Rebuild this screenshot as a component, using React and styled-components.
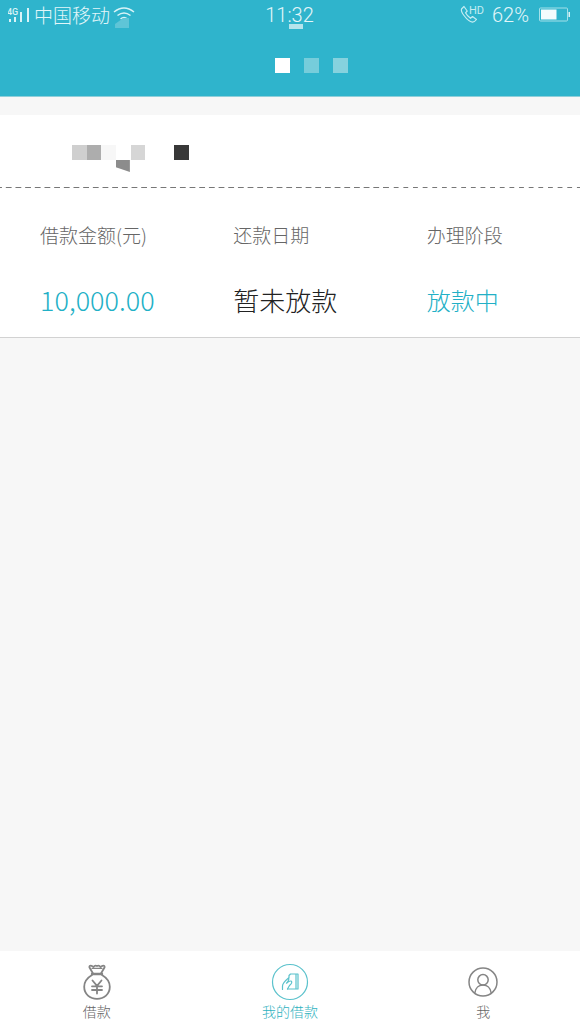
import React, { useState } from 'react';
import styled, { createGlobalStyle } from 'styled-components';

const loan = {
  amount: '10,000.00',
  dueDate: '暂未放款',
  stage: '放款中',
};

const BagIcon = () => (
  <svg width="28" height="36" viewBox="0 0 28 36" fill="none" stroke="#858585" strokeWidth="1.8" strokeLinejoin="round" strokeLinecap="round">
    <path d="M10 9.500 L6.500 3.500 Q6 1.200 8.500 1.800 L10.500 3 Q12 .8 14 2 Q16 .8 17.500 3 L19.500 1.800 Q22 1.200 21.500 3.500 L18 9.500" />
    <path d="M9 4.300 H19" strokeWidth="1.200" />
    <path d="M9 10 H19" strokeWidth="2.400" />
    <path d="M9 11 C4 14 1.200 18 1.200 22.800 C1.200 30.200 7 34.800 14 34.800 S26.800 30.200 26.800 22.800 C26.800 18 24 14 19 11" />
    <path d="M9.500 16.500 L14 21.800 L18.500 16.500 M14 21.800 V29.500 M9 22.300 H19 M9 26 H19" />
  </svg>
);

const CardIcon = () => (
  <svg width="38" height="38" viewBox="0 0 38 38" fill="none" stroke="#5bc2cc" strokeWidth="1.200" strokeLinejoin="round" strokeLinecap="round">
    <circle cx="19" cy="19" r="17.500" />
    <path d="M18 14.500 V12.500 L19.500 11 H27 V26 H16.500 M25 11.200 V25.800" />
    <path d="M11.500 26.500 V23 Q11.500 20 17.500 15 Q18.500 16.200 16.800 18.500 L15.500 20.200 Q19 17.200 20.500 18.300 Q21.500 19.800 18.500 22.500 L16.500 26" />
  </svg>
);

const UserIcon = () => (
  <svg width="30" height="30" viewBox="0 0 30 30" fill="none" stroke="#858585" strokeWidth="1.500">
    <circle cx="15" cy="15" r="14" />
    <circle cx="15" cy="12.800" r="5.200" />
    <path d="M6.800 26 C7.500 20.800 11 18 15 18 S22.500 20.800 23.200 26" />
  </svg>
);

const SignalIcon = () => (
  <svg width="24" height="18" viewBox="0 0 24 18" fill="#d9f3f7">
    <rect x="1" y="13" width="2" height="3" />
    <rect x="6" y="11" width="2" height="5" />
    <rect x="12" y="6" width="2" height="10" />
    <rect x="19" y="2" width="2" height="14" />
    <text x="-1" y="9" fontSize="9" fontWeight="500" fontFamily="Roboto, sans-serif">4G</text>
  </svg>
);

const WifiIcon = () => (
  <svg width="22" height="18" viewBox="0 0 22 18" fill="none" stroke="#d9f3f7" strokeWidth="1.500">
    <path d="M1 6 Q11 -2 21 6 M4.500 9.500 Q11 4.500 17.500 9.500 M7.500 13 Q11 10 14.500 13" />
    <circle cx="11" cy="15.200" r="1" fill="#d9f3f7" stroke="none" />
  </svg>
);

const CallIcon = () => (
  <svg width="25" height="20" viewBox="0 0 25 20" fill="none" stroke="#c5ecf2" strokeWidth="1.200" strokeLinejoin="round">
    <path d="M4 1.500 L1.500 4 Q.8 6.500 4 10.500 Q8.500 16.500 12.500 17.200 Q14.500 17 16.500 14.500 L12.500 11.500 L10.500 13.300 Q7 10.800 5.500 7.800 L7.200 6 Z" />
    <text x="9" y="9" fontSize="11" fontWeight="400" fill="#c5ecf2" stroke="none" fontFamily="Roboto, sans-serif">HD</text>
  </svg>
);

const BatteryIcon = () => (
  <svg width="32" height="16" viewBox="0 0 32 16">
    <rect x=".5" y="1" width="28" height="13" rx="1" fill="none" stroke="#a5e0e9" />
    <rect x="2" y="2.500" width="15.500" height="10" fill="#f4fcfd" />
    <rect x="29.500" y="5" width="1.500" height="5" fill="#d9f3f7" />
  </svg>
);

const tabs = [
  { id: 'borrow', label: '借款', icon: <BagIcon /> },
  { id: 'loans', label: '我的借款', icon: <CardIcon /> },
  { id: 'me', label: '我', icon: <UserIcon /> },
];

const App = () => {
  const [active, setActive] = useState('loans');

  return (
    <Page>
      <GlobalStyle />
      <Header>
        <StatusBar>
          <StatusGroup>
            <SignalIcon />
            <Carrier>中国移动</Carrier>
            <WifiWrap>
              <WifiSmudge />
              <WifiIcon />
            </WifiWrap>
          </StatusGroup>
          <Clock>
            11:32
            <ClockSmudge />
          </Clock>
          <StatusGroup $end>
            <CallIcon />
            <Percent>62%</Percent>
            <BatteryIcon />
          </StatusGroup>
        </StatusBar>
        <TitleBlocks>
          <Block $color="#ffffff" />
          <Block $color="#76cddb" />
          <Block $color="#86d2de" />
        </TitleBlocks>
      </Header>

      <Card>
        <CardTop>
          <NameBlocks>
            <Block $color="#cfcfcf" />
            <Block $color="#adadad" />
            <Block $color="#f7f7f7" />
            <Block>
              <Drip />
            </Block>
            <Block $color="#d6d6d6" />
            <Block />
            <Block />
            <Block $color="#383838" />
          </NameBlocks>
        </CardTop>
        <Divider>
          <Dashes $count={40} $gap="62%" />
          <Dashes $count={20} $gap="75%" />
        </Divider>
        <Details>
          <Detail>
            <Label>借款金额(元)</Label>
            <Value $color="#22b0c6" $size="27px">{loan.amount}</Value>
          </Detail>
          <Detail>
            <Label>还款日期</Label>
            <Value>{loan.dueDate}</Value>
          </Detail>
          <Detail>
            <Label>办理阶段</Label>
            <Value $color="#22b0c6" $size="24px">{loan.stage}</Value>
          </Detail>
        </Details>
      </Card>

      <TabBar>
        {tabs.map((tab) => (
          <Tab
            key={tab.id}
            type="button"
            $active={tab.id === active}
            onClick={() => setActive(tab.id)}
          >
            <IconBox>{tab.icon}</IconBox>
            {tab.label}
          </Tab>
        ))}
      </TabBar>
    </Page>
  );
};

export default App;

// Styled components
const GlobalStyle = createGlobalStyle`
  * {
    box-sizing: border-box;
  }

  body {
    margin: 0;
    background: #f7f7f7;
    font-family: "Noto Sans CJK SC", sans-serif;
    font-weight: 300;
  }

  svg {
    display: block;
    flex: none;
  }
`;

const Page = styled.div`
  display: flex;
  flex-direction: column;
  min-height: 100vh;
`;

const Header = styled.header`
  height: 97px;
  background: #2fb4cc;
  border-bottom: 1px solid #8fcfda;
`;

const StatusBar = styled.div`
  display: grid;
  grid-template-columns: 1fr auto 1fr;
  align-items: center;
  height: 28px;
  padding: 0 9px 0 8px;
  color: #e3f6f9;
`;

const StatusGroup = styled.div`
  display: flex;
  align-items: center;
  gap: 2px;
  height: 30px;
  justify-content: ${({ $end }) => ($end ? 'flex-end' : 'flex-start')};
`;

const Carrier = styled.span`
  font-size: 19px;
  line-height: 28px;
`;

const WifiWrap = styled.span`
  position: relative;
  margin-left: 1px;
`;

const WifiSmudge = styled.span`
  position: absolute;
  left: 2px;
  top: 12px;
  width: 14px;
  height: 10px;
  background: #5fc5d7;
  clip-path: polygon(0 60%, 60% 0, 100% 0, 100% 100%, 0 100%);
`;

const Clock = styled.time`
  position: relative;
  font-family: Roboto, sans-serif;
  font-size: 20px;
  font-weight: 300;
  line-height: 30px;
`;

const ClockSmudge = styled.span`
  position: absolute;
  left: 24px;
  top: 24px;
  width: 14px;
  height: 5px;
  background: #b5e4ec;
`;

const Percent = styled.span`
  padding: 0 8px 0 5px;
  font-family: Roboto, sans-serif;
  font-size: 20px;
  font-weight: 300;
  line-height: 30px;
`;

const TitleBlocks = styled.div`
  display: flex;
  justify-content: center;
  gap: 14px;
  padding: 30px 0 0 42px;
`;

const Block = styled.span`
  position: relative;
  min-width: 14px;
  width: 15px;
  height: 15px;
  background: ${({ $color }) => $color || 'transparent'};
`;

const Drip = styled.span`
  position: absolute;
  left: 0;
  top: 15px;
  width: 14px;
  height: 12px;
  background: #8c8c8c;
  clip-path: polygon(0 0, 100% 0, 100% 100%, 0 60%);
`;

const Card = styled.section`
  margin-top: 18px;
  background: #fff;
  border-bottom: 1px solid #d2d2d2;
`;

const CardTop = styled.div`
  height: 72px;
  padding: 30px 72px 0;
`;

const NameBlocks = styled.div`
  display: flex;
  width: 117px;
`;

const Divider = styled.div`
  display: flex;
`;

const Dashes = styled.span`
  flex: ${({ $count }) => $count};
  height: 1px;
  background: linear-gradient(90deg, #777 24%, transparent 24% ${({ $gap }) => $gap}, #777 ${({ $gap }) => $gap});
  background-size: calc(100% / ${({ $count }) => $count}) 1px;
`;

const Details = styled.dl`
  display: grid;
  grid-template-columns: repeat(3, 1fr);
  margin: 0;
  padding: 32px 0 17px;
`;

const Detail = styled.div`
  padding-left: 40px;
  white-space: nowrap;
`;

const Label = styled.dt`
  color: #666;
  font-size: 19px;
  line-height: 30px;
`;

const Value = styled.dd`
  margin: 30px 0 0;
  color: ${({ $color }) => $color || '#222'};
  font-size: ${({ $size }) => $size || '26px'};
  line-height: 40px;
`;

const TabBar = styled.nav`
  display: grid;
  grid-template-columns: repeat(3, 1fr);
  height: 80px;
  margin-top: auto;
  background: #fff;
`;

const Tab = styled.button`
  display: flex;
  flex-direction: column;
  align-items: center;
  padding: 12px 0 0;
  border: 0;
  background: none;
  color: ${({ $active }) => ($active ? '#30b2c0' : '#666')};
  font: inherit;
  font-size: 14px;
  line-height: 20px;
  cursor: pointer;
`;

const IconBox = styled.span`
  display: flex;
  align-items: center;
  height: 38px;
`;
